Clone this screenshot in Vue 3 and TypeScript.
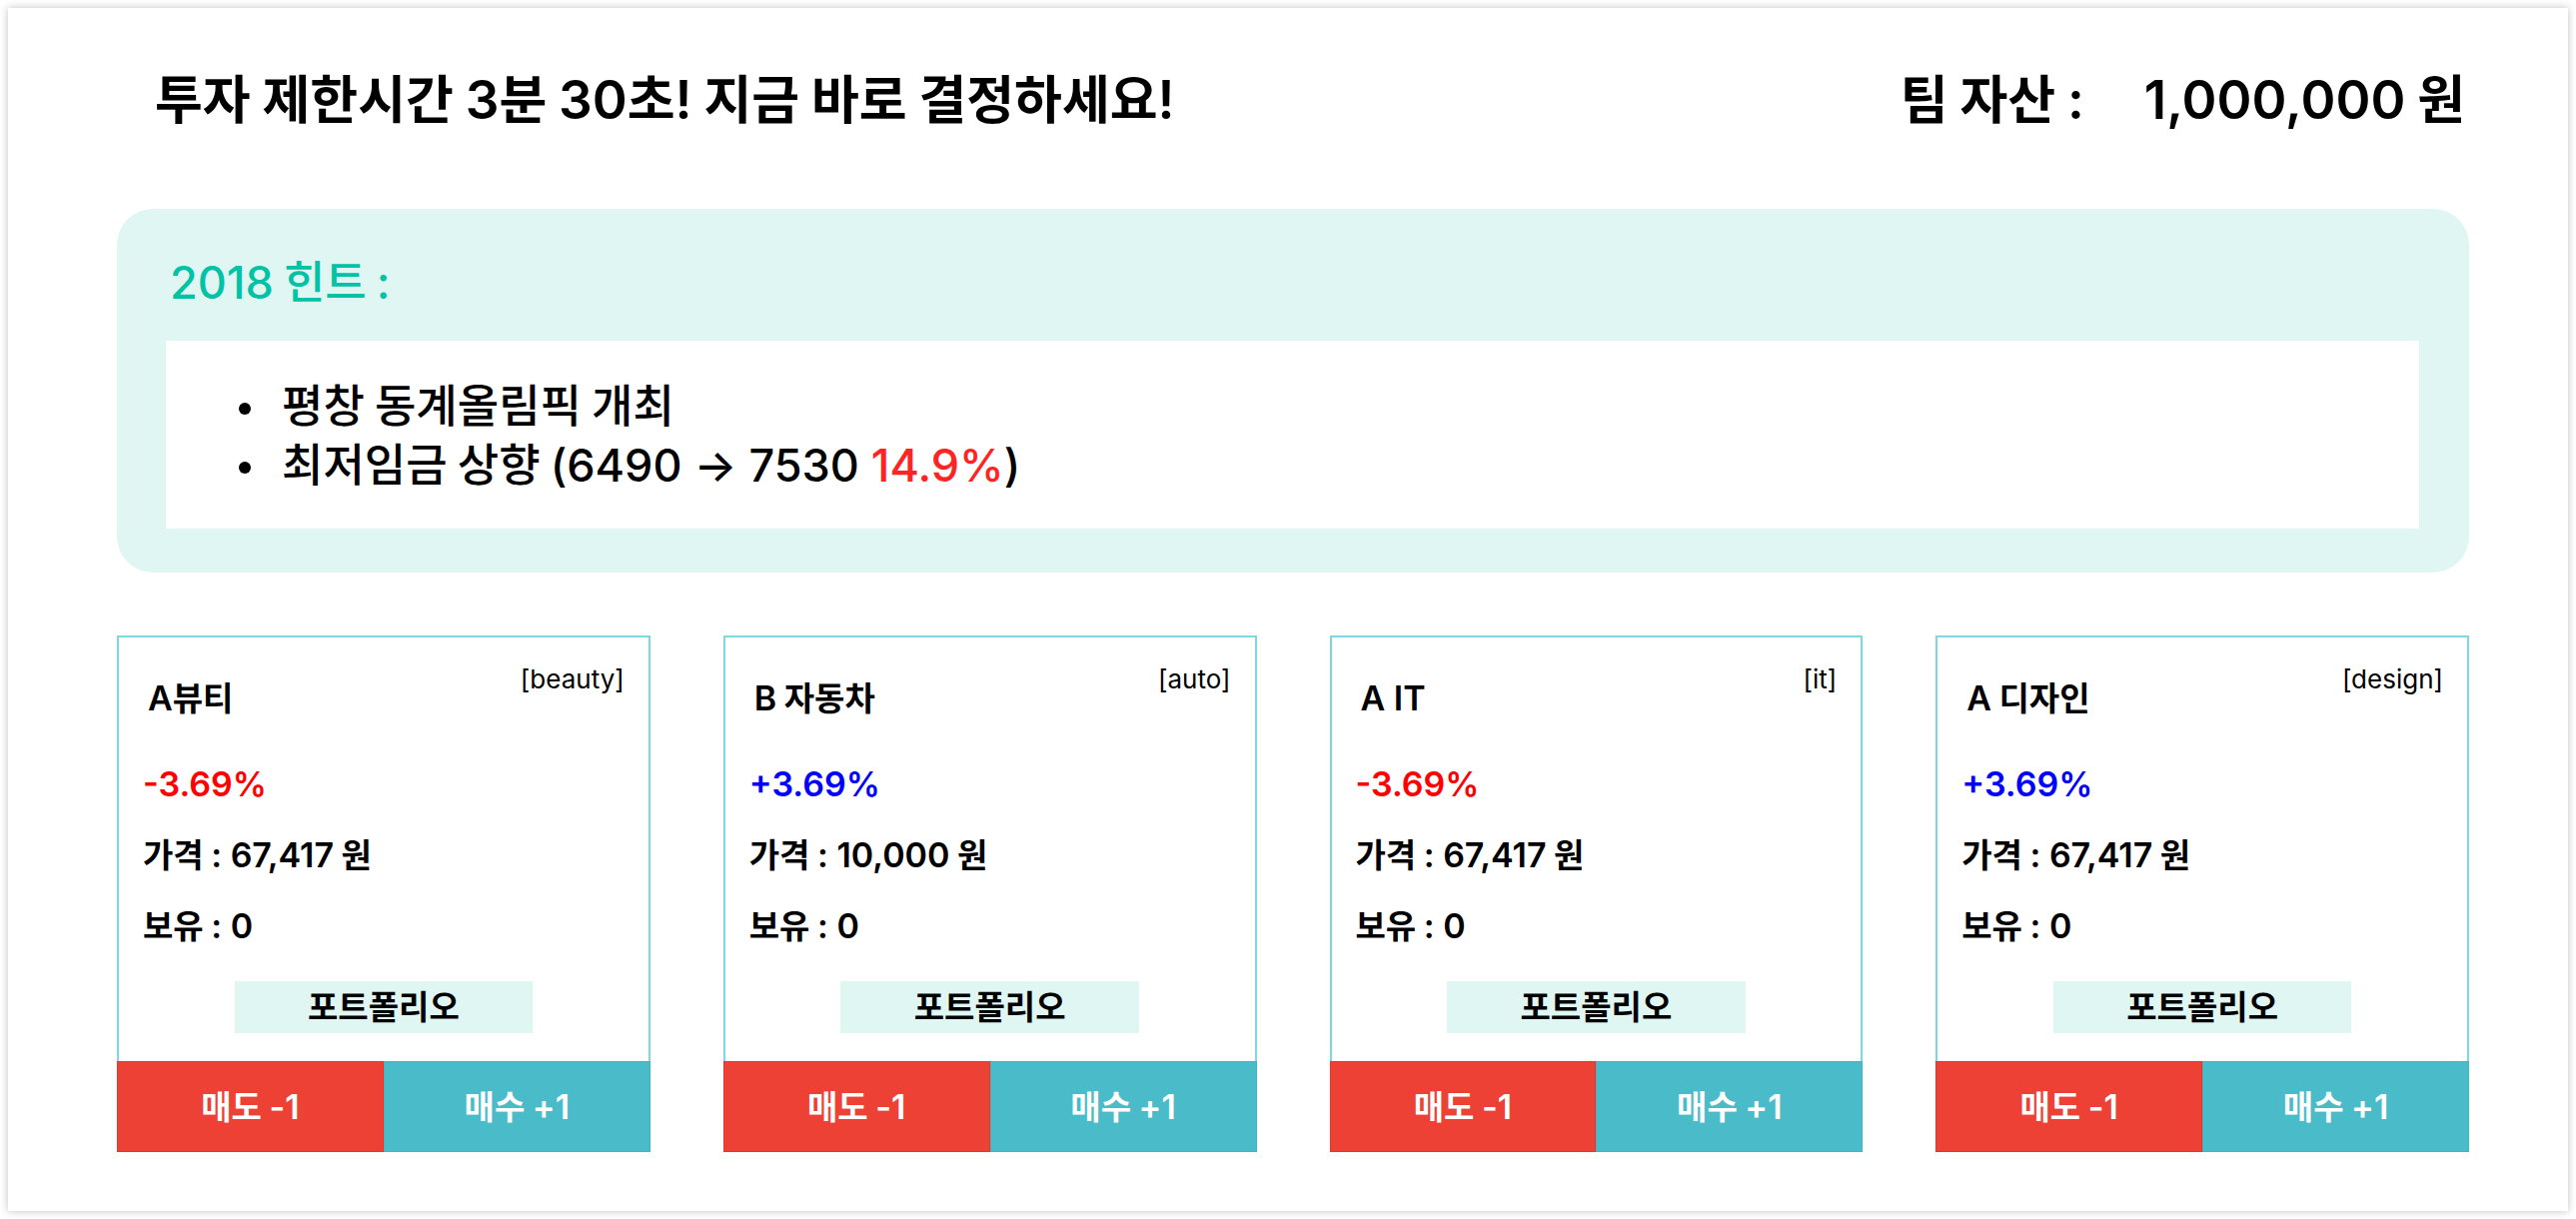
<script setup lang="ts">
import { computed, h, ref, type FunctionalComponent } from 'vue'

interface Stock {
  name: string
  tag: string
  rate: number
  price: number
  held: number
}

// Hangul syllables and the spaces beside them get their own span so they can be sized next to the Latin face.
const MixedText: FunctionalComponent<{ text: string }> = (props) =>
  h(
    'span',
    props.text
      .split(/( ?[가-힣]+(?: [가-힣]+)* ?)/)
      .filter((run) => run !== '')
      .map((run) => (/[가-힣]/.test(run) ? h('span', { class: 'ko' }, run) : run)),
  )
MixedText.props = ['text']

const cash = ref(1000000)
const stocks = ref<Stock[]>([
  { name: 'A뷰티', tag: 'beauty', rate: -3.69, price: 67417, held: 0 },
  { name: 'B 자동차', tag: 'auto', rate: 3.69, price: 10000, held: 0 },
  { name: 'A IT', tag: 'it', rate: -3.69, price: 67417, held: 0 },
  { name: 'A 디자인', tag: 'design', rate: 3.69, price: 67417, held: 0 },
])

const won = (value: number) => `${value.toLocaleString('en-US')} 원`
const percent = (value: number) => `${value > 0 ? '+' : ''}${value}%`
const cashText = computed(() => won(cash.value))

function sell(stock: Stock) {
  if (stock.held === 0) return
  stock.held -= 1
  cash.value += stock.price
}

function buy(stock: Stock) {
  if (cash.value < stock.price) return
  stock.held += 1
  cash.value -= stock.price
}
</script>

<template>
  <div class="page">
    <main class="panel">
      <header class="top">
        <h1 class="headline"><MixedText text="투자 제한시간 3분 30초! 지금 바로 결정하세요!" /></h1>
        <div class="assets">
          <MixedText text="팀 자산 :" />
          <MixedText :text="cashText" />
        </div>
      </header>

      <section class="hint">
        <h2 class="hint-title"><MixedText text="2018 힌트 :" /></h2>
        <ul class="hint-list">
          <li><MixedText text="평창 동계올림픽 개최" /></li>
          <li>
            <p><MixedText text="최저임금 상향 (6490 → 7530 " /><em>14.9%</em>)</p>
          </li>
        </ul>
      </section>

      <section class="cards">
        <article v-for="stock in stocks" :key="stock.tag" class="card">
          <div class="body">
            <div class="card-head">
              <h3 class="name"><MixedText :text="stock.name" /></h3>
              <span class="tag">[{{ stock.tag }}]</span>
            </div>
            <p class="rate" :class="stock.rate > 0 ? 'up' : 'down'">{{ percent(stock.rate) }}</p>
            <p class="line"><MixedText :text="`가격 : ${won(stock.price)}`" /></p>
            <p class="line"><MixedText :text="`보유 : ${stock.held}`" /></p>
            <button type="button" class="portfolio"><MixedText text="포트폴리오" /></button>
          </div>
          <div class="actions">
            <button type="button" class="sell" @click="sell(stock)"><MixedText text="매도 -1" /></button>
            <button type="button" class="buy" @click="buy(stock)"><MixedText text="매수 +1" /></button>
          </div>
        </article>
      </section>
    </main>
  </div>
</template>

<style>
body {
  background: #ffffff;
}

.ko {
  font-family: 'Noto Sans CJK KR', sans-serif;
  font-size: var(--ko-size);
  line-height: 1;
}
</style>

<style scoped>
.page {
  box-sizing: border-box;
  min-height: 100vh;
  padding: 8px;
  color: #000000;
  font-family: Inter, 'Noto Sans CJK KR', sans-serif;
  white-space: pre-wrap;
}

h1,
h2,
h3,
p,
ul {
  margin: 0;
  padding: 0;
}

button {
  box-sizing: border-box;
  margin: 0;
  padding: 0;
  border: 0;
  color: inherit;
  font: inherit;
  cursor: pointer;
}

.panel {
  padding: 58px 99px 59px 109px;
  background: #ffffff;
  box-shadow: 0 0 8px rgba(0, 0, 0, 0.25);
}

.top {
  display: flex;
  justify-content: space-between;
  padding: 0 4px 0 38px;
  font-size: 53px;
  line-height: 68px;
  font-weight: 600;
  --ko-size: 52px;
}

.headline {
  font-size: inherit;
  font-weight: inherit;
}

.assets {
  display: flex;
  gap: 60px;
}

.hint {
  margin-top: 75px;
  padding: 45px 50px 44px 49px;
  border-radius: 36px;
  background: #e0f6f3;
  font-size: 45px;
  font-weight: 500;
  --ko-size: 45px;
}

.hint-title {
  margin-left: 4px;
  color: #00c2a5;
  font-size: inherit;
  font-weight: inherit;
  line-height: 58px;
}

.hint-list {
  margin-top: 29px;
  padding: 36px 73px 34px;
  background: #ffffff;
  line-height: 59px;
  list-style: none;
}

.hint-list li {
  display: flex;
  align-items: center;
  gap: 31px;
}

.hint-list li::before {
  content: '';
  width: 12px;
  height: 12px;
  margin-top: 4px;
  border-radius: 50%;
  background: #000000;
}

.hint-list em {
  color: #ff2424;
  font-style: normal;
}

.cards {
  display: grid;
  grid-template-columns: repeat(4, 1fr);
  gap: 73px;
  margin-top: 63px;
  font-size: 34px;
  line-height: 42px;
  font-weight: 600;
  --ko-size: 33px;
}

.body {
  display: flex;
  flex-direction: column;
  padding: 25px 24px 28px;
  border: 2px solid #7dd8df;
  border-bottom: 0;
}

.card-head {
  display: flex;
  justify-content: space-between;
  align-items: flex-start;
}

.name {
  margin: 15px 0 0 5px;
  font-size: inherit;
  font-weight: inherit;
}

.tag {
  font-size: 26px;
  line-height: 34px;
  font-weight: 400;
}

.rate {
  margin-top: 44px;
}

.up {
  color: #0000ff;
}

.down {
  color: #ff0000;
}

.line {
  margin-top: 29px;
}

.portfolio {
  align-self: center;
  width: 62%;
  height: 52px;
  margin-top: 34px;
  background: #e0f6f3;
}

.actions {
  display: grid;
  grid-template-columns: 1fr 1fr;
  color: #ffffff;
}

.actions button {
  height: 91px;
}

.sell {
  border: 1px solid #ef3226;
  background: #ec4134;
}

.buy {
  border: 1px solid #3fb5c3;
  background: #4abbc8;
}
</style>
